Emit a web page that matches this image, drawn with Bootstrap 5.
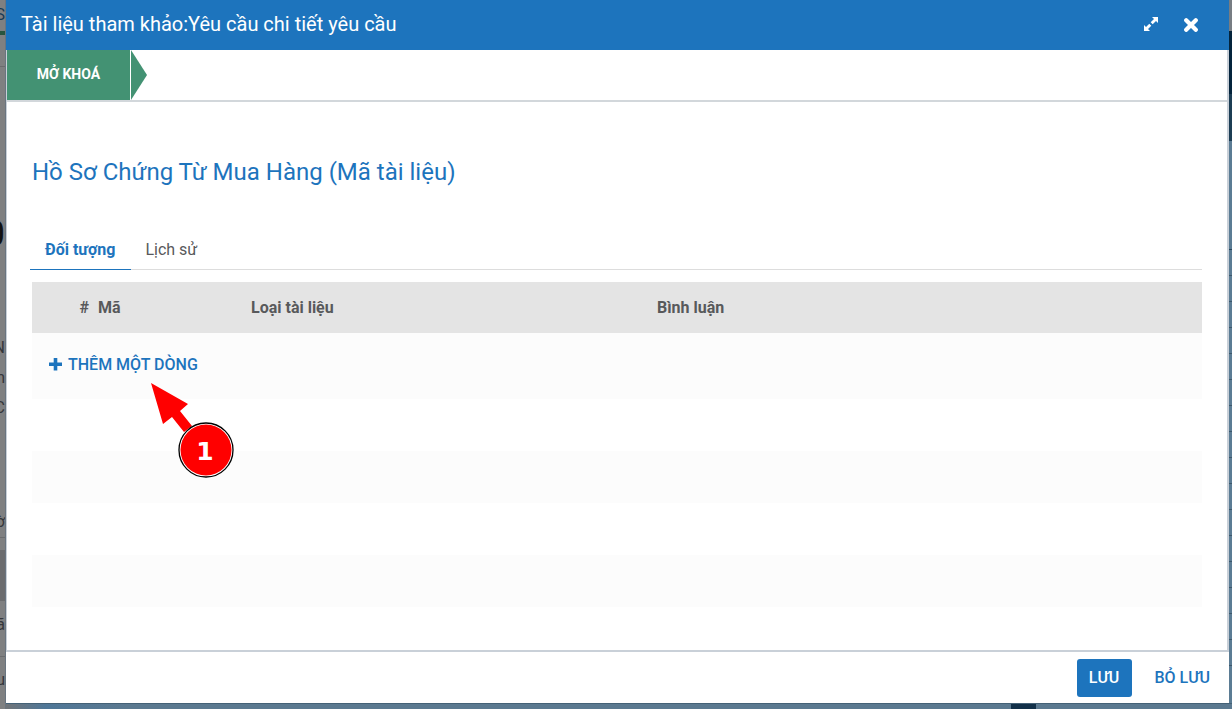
<!DOCTYPE html>
<html lang="vi">
<head>
<meta charset="utf-8">
<meta name="viewport" content="width=device-width, initial-scale=1">
<title>Tài liệu tham khảo</title>
<link href="https://cdn.jsdelivr.net/npm/bootstrap@5.3.0/dist/css/bootstrap.min.css" rel="stylesheet">
<style>
  :root { --brand: #1d74bd; --ink: #58595b; --edge: #c9d0d8; }
  body { font-family: Roboto, "Liberation Sans", sans-serif; font-size: 16px; line-height: 24px; color: var(--ink); background: #5b7990; }
  .screen { display: grid; grid-template-columns: 6px minmax(0, 1fr) 3px; grid-template-rows: minmax(0, 1fr) 6px; height: 100vh; }

  /* dimmed page that shows round the dialog */
  .page-left { grid-row: 1 / 3; background: #7f8081; border-right: 1px solid #6a7580; color: #35373b; direction: rtl; white-space: nowrap; }
  .page-left div { flex: none; overflow: hidden; height: 30px; line-height: 30px; }
  .page-left .gap-s { height: 31px; }
  .page-left .gap-m { height: 84px; }
  .page-left .gap-l { height: 152px; }
  .page-left .rule { height: 1px; background: #6b6c6e; }
  .page-left .accent { height: 4px; background: #28553f; }
  .page-left .block { height: 51px; background: #6b6c6e; margin: 12px 0 9px; }
  .page-left .big { font-size: 36px; color: #111; }
  .page-right { background: linear-gradient(#777d83 31px, #04243c 31px 94px, #1c3d54 94px 141px, #5b7c94 141px); }
  .page-right div { height: 26px; border-bottom: 1px solid #3c586c; }
  .page-right div:first-child { height: 250px; border-color: #26455b; }
  .page-bottom { grid-column: 2 / 4; background: linear-gradient(90deg, #707478, #4f7798 40px, #5b7990 120px); border-top: 1px solid #456277; padding-right: 196px; }
  .page-bottom div { width: 25px; background: #123049; }

  .dialog { background: #fff; }
  .dialog-head { background: var(--brand); color: #fff; height: 50px; padding: 0 23px 2px 15px; }
  .dialog-head h1 { font-size: 20px; line-height: 28px; font-weight: 400; }
  .icon-btn { width: 30px; height: 30px; }
  .dialog-main { border-left: 1px solid var(--edge); border-right: 2px solid var(--edge); border-bottom: 2px solid var(--edge); }
  .steps { height: 52px; border-bottom: 2px solid #d2d7db; }
  .step { width: 123px; background: #439273; color: #fff; font-size: 14px; font-weight: 700; padding-bottom: 3px; }
  .step-tip { width: 16px; margin-left: 1px; background: #439273; clip-path: polygon(0 0, 100% 50%, 0 100%); }
  .content { padding: 56px 25px 0 23px; }
  .content h2 { font-size: 24px; line-height: 28px; font-weight: 400; color: var(--brand); margin: 0 2px 44px; }
  .nav-tabs { border-color: #ddd; }
  .nav-tabs .nav-link { border: 0; border-bottom: 1px solid transparent; border-radius: 0; color: var(--ink); padding: 8px 16px 7px 15px; font-size: 16px; height: 40px; }
  .nav-tabs .nav-link.active { color: var(--brand); border-color: var(--brand); font-weight: 700; background: none; }
  .nav-tabs .nav-item + .nav-item .nav-link { padding-left: 14px; }
  .grid-table { table-layout: fixed; margin: 12px 0 0 2px; width: calc(100% - 2px); color: var(--ink); }
  .grid-table th { background: #e4e4e4; height: 51px; padding: 0 4px; font-weight: 700; vertical-align: middle; }
  .grid-table .c-num { padding-right: 5px; }
  .grid-table td { height: 52px; padding: 0 16px; }
  .grid-table tbody tr:nth-child(odd) td { background: #fcfcfc; }
  .grid-table tbody tr:first-child td { height: 66px; padding-bottom: 3px; }
  .add-row { color: var(--brand); font-weight: 500; }
  .c-num { width: 62px; } .c-code { width: 153px; } .c-type { width: 406px; }
  .callout-mark { left: 102px; top: 29px; width: 86px; height: 98px; pointer-events: none; }
  .callout-mark text { font-family: "DejaVu Sans", sans-serif; font-weight: 700; font-size: 25px; }
  .dialog-foot { height: 51px; padding: 0 9px 0 0; }
  .dialog-foot .btn { font-size: 16px; line-height: 24px; font-weight: 500; height: 38px; padding: 0 10px; border-radius: 3px; }
  .dialog-foot .save { background: var(--brand); color: #fff; width: 55px; }
  .dialog-foot .discard { color: var(--brand); margin-left: 13px; }
</style>
</head>
<body>
<div class="screen">
  <div class="page-left d-flex flex-column overflow-hidden" aria-hidden="true">
    <div class="gap-s" style="color:#173a55">S</div>
    <div class="accent"></div>
    <div class="gap-s"></div>
    <div class="rule"></div>
    <div class="gap-l"></div>
    <div class="big">0</div>
    <div class="gap-m"></div>
    <div>N</div>
    <div>n</div>
    <div>C</div>
    <div class="gap-m"></div>
    <div>ờ</div>
    <div class="rule"></div>
    <div class="block"></div>
    <div>ã</div>
    <div class="rule mt-3"></div>
    <div class="mt-2">u</div>
  </div>

  <section class="dialog d-flex flex-column" role="dialog" aria-labelledby="dialog-title">
    <header class="dialog-head d-flex align-items-center justify-content-between">
      <h1 class="m-0" id="dialog-title">Tài liệu tham khảo:Yêu cầu chi tiết yêu cầu</h1>
      <div class="d-flex" style="gap:10px">
        <button type="button" class="icon-btn btn p-0 border-0 d-flex align-items-center justify-content-center" aria-label="Phóng to">
          <svg width="16" height="16" viewBox="0 0 16 16" fill="#fff"><path d="M9 1h6v6l-2-2-3.300 3.300-2-2L11 3zM7 15H1V9l2 2 3.300-3.300 2 2L5 13z"/></svg>
        </button>
        <button type="button" class="icon-btn btn p-0 border-0 d-flex align-items-center justify-content-center" aria-label="Đóng">
          <svg width="16" height="16" viewBox="0 0 16 16"><path d="M3.200 4.200l9.600 9.600M12.800 4.200l-9.600 9.600" stroke="#fff" stroke-width="4.200" stroke-linecap="round"/></svg>
        </button>
      </div>
    </header>

    <main class="dialog-main flex-grow-1">
      <div class="steps d-flex">
        <button type="button" class="step border-0 d-flex align-items-center justify-content-center">MỞ KHOÁ</button>
        <span class="step-tip"></span>
      </div>
      <div class="content">
        <h2>Hồ Sơ Chứng Từ Mua Hàng (Mã tài liệu)</h2>
        <ul class="nav nav-tabs">
          <li class="nav-item"><a class="nav-link active" href="#doi-tuong">Đối tượng</a></li>
          <li class="nav-item"><a class="nav-link" href="#lich-su">Lịch sử</a></li>
        </ul>
        <table class="grid-table" id="doi-tuong">
          <thead>
            <tr><th class="c-num text-end" scope="col">#</th><th class="c-code" scope="col">Mã</th><th class="c-type" scope="col">Loại tài liệu</th><th scope="col">Bình luận</th></tr>
          </thead>
          <tbody>
            <tr><td colspan="4">
              <div class="position-relative">
                <button type="button" class="add-row bg-transparent border-0 p-0 d-flex align-items-center">
                  <svg class="me-1" width="16" height="14" viewBox="0 0 16 14" aria-hidden="true"><path d="M7.500 0v12.500M1 6.200h13" stroke="#1d74bd" stroke-width="3.600"/></svg>
                  <span>THÊM MỘT DÒNG</span>
                </button>
                <svg class="callout-mark position-absolute" viewBox="0 0 86 98" role="img" aria-label="1">
                  <path d="M1 1L38 22 30 29 42 44 34 50 22 35 13 42Z" fill="#f00"/>
                  <circle cx="56" cy="68" r="27" fill="#fff" stroke="#000" stroke-width="1.300"/>
                  <circle cx="56" cy="68" r="25.500" fill="#f00"/>
                  <text x="55" y="78" fill="#fff" text-anchor="middle">1</text>
                </svg>
              </div>
            </td></tr>
            <tr><td colspan="4"></td></tr>
            <tr><td colspan="4"></td></tr>
            <tr><td colspan="4"></td></tr>
            <tr><td colspan="4"></td></tr>
          </tbody>
        </table>
      </div>
    </main>

    <footer class="dialog-foot d-flex align-items-center justify-content-end">
      <button type="button" class="btn save">LƯU</button>
      <button type="button" class="btn discard border-0">BỎ LƯU</button>
    </footer>
  </section>

  <div class="page-right overflow-hidden" aria-hidden="true">
    <div></div><div></div><div></div><div></div><div></div><div></div><div></div><div></div><div></div><div></div><div></div><div></div><div></div><div></div><div></div><div></div><div></div>
  </div>
  <div class="page-bottom d-flex justify-content-end" aria-hidden="true"><div></div></div>
</div>
<script src="https://cdn.jsdelivr.net/npm/bootstrap@5.3.0/dist/js/bootstrap.bundle.min.js"></script>
</body>
</html>
